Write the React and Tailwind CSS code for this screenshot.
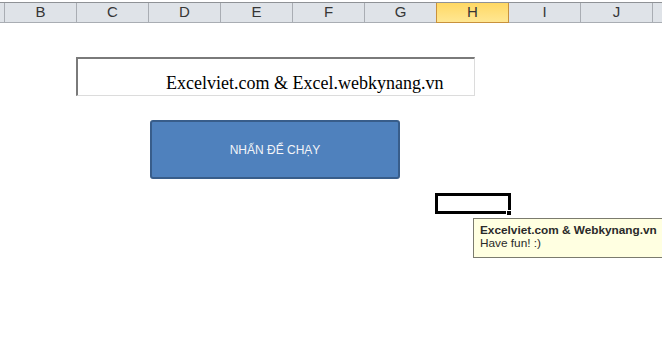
import React from "react"

const cols = ["B", "C", "D", "E", "F", "G", "H", "I", "J"]

const ColHeader = ({label}) => {
  if (label === "H") {
    return (
      <div className="-ml-px w-[73px] h-[20px] shrink-0 flex items-center justify-center border-x border-b border-[#c8913c] bg-gradient-to-b from-[#ffd862] to-[#ffe792] text-[15px] text-[#363636]">
        {label}
      </div>
    )
  }
  return (
    <div className="w-[72px] h-[20px] shrink-0 flex items-center justify-center border-r border-b border-[#a9adb3] text-[15px] text-[#363636]">
      {label}
    </div>
  )
}

export default function App() {
  return (
    <div className="relative w-[662px] h-[344px] overflow-hidden bg-white" style={{fontFamily: '"Liberation Sans", Arial, sans-serif'}}>
      {/* column headers */}
      <div className="mt-[2px] flex border-t border-[#8f9296] bg-[#dfe3e8]">
        <div className="w-[5px] h-[20px] shrink-0 border-r border-b border-[#a9adb3]" />
        {cols.map(c => <ColHeader key={c} label={c} />)}
        <div className="flex-1 h-[20px] border-b border-[#a9adb3]" />
      </div>

      {/* text box */}
      <div className="mt-[34px] ml-[76px] w-[399px] h-[39px] border-t-2 border-l-2 border-[#7a7a7a] border-r border-b border-r-[#dcdcdc] border-b-[#dcdcdc] pt-[14px] pl-[88px]">
        <p className="text-[18px] leading-[20px] text-black whitespace-nowrap" style={{fontFamily: '"Liberation Serif", "Times New Roman", serif'}}>
          Excelviet.com &amp; Excel.webkynang.vn
        </p>
      </div>

      {/* macro button */}
      <div className="mt-[24px] ml-[150px] w-[250px] h-[59px] rounded-[3px] border-2 border-[#385d8a] bg-[#4f81bd] flex items-center justify-center">
        <span className="text-[12px] text-[#f2f4f8]">NHẤN ĐỂ CHẠY</span>
      </div>

      {/* active cell */}
      <div className="absolute left-[435px] top-[193px] w-[76px] h-[21px] border-[3px] border-black" />
      <div className="absolute left-[506px] top-[210px] w-[6px] h-[6px] bg-black border border-white" />

      {/* cell comment */}
      <div className="absolute left-[473px] top-[218px] w-[200px] h-[40px] border border-[#7b7b6e] bg-[#ffffe1] pl-[6px] pt-[5px] text-[11.8px] leading-[13px] text-[#2a2a2a]">
        <div className="font-bold whitespace-nowrap">Excelviet.com &amp; Webkynang.vn</div>
        <div>Have fun! :)</div>
      </div>
    </div>
  )
}
